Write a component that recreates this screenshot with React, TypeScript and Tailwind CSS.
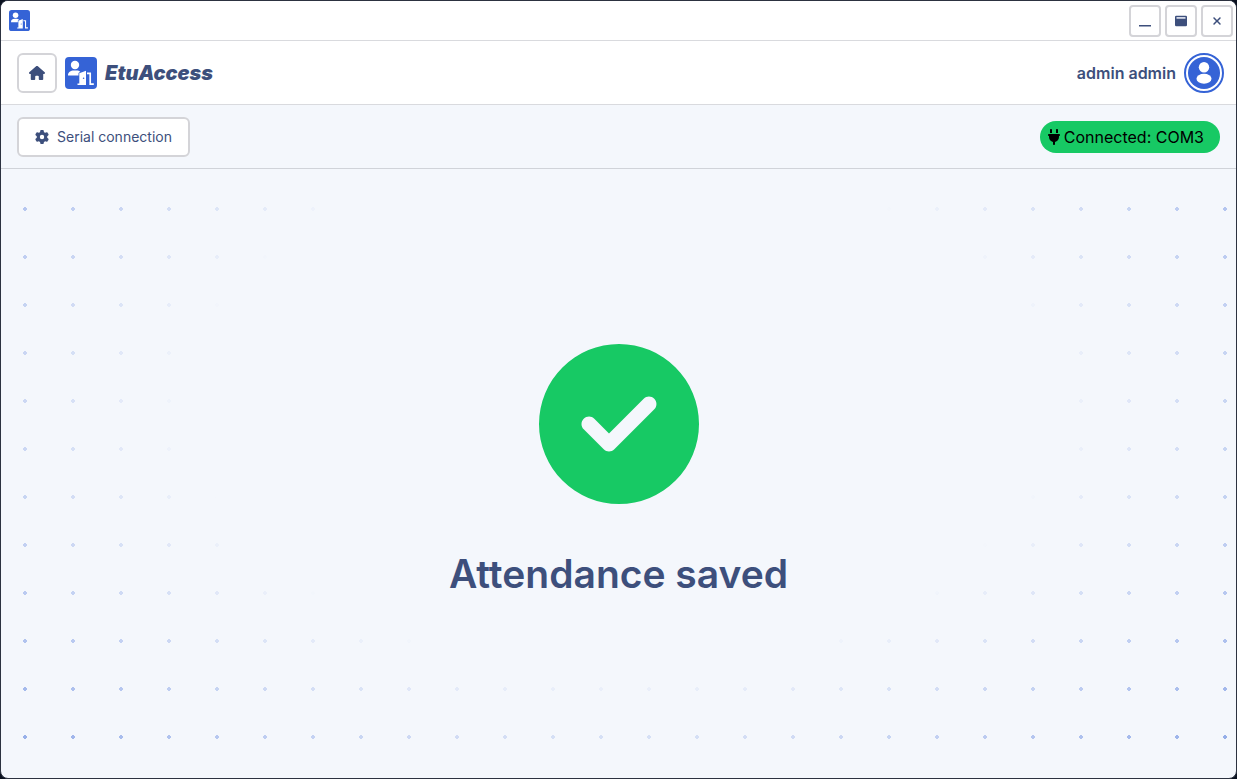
import { FaCircleCheck, FaGear, FaHouse, FaPlug, FaXmark } from "react-icons/fa6";

const windowButton =
  "grid size-8 place-items-center rounded border-2 border-[#d4d4d8] bg-white text-[#3d4f7c]";

function LogoMark({ className }: { className: string }) {
  return (
    <svg viewBox="0 0 32 32" className={className} aria-hidden="true">
      <rect width="32" height="32" rx="4" fill="#3563d6" />
      <circle cx="10" cy="8" r="4.2" fill="#fff" />
      <path d="M3 18.500C3 15.200 5.500 13.500 9 13.500h2.500c1.600 0 2.900.4 3.800 1.300L13.500 16v2.500z" fill="#fff" />
      <path d="M12.500 28v-1.500h1.800V16.300l6.700-2.500V28z" fill="#fff" />
      <path d="M22 16.300h3.200v10.900h3.600" fill="none" stroke="#fff" strokeWidth="1.700" />
      <circle cx="18.600" cy="21.300" r=".8" fill="#3563d6" />
    </svg>
  );
}

function TitleBar() {
  return (
    <div className="flex h-10 shrink-0 items-center justify-between border-b border-[#d9dade] bg-white pl-2 pr-[3px]">
      <LogoMark className="size-[21px]" />
      <div className="flex gap-1">
        <button type="button" aria-label="Minimize" className={windowButton}>
          <svg viewBox="0 0 12 12" className="size-3" aria-hidden="true">
            <path d="M0 10h12v1.500H0z" fill="currentColor" />
          </svg>
        </button>
        <button type="button" aria-label="Maximize" className={windowButton}>
          <svg viewBox="0 0 12 12" className="size-3" aria-hidden="true">
            <rect y=".7" width="12" height="10.600" rx="1.300" fill="currentColor" />
            <rect x="1.500" y="2" width="9" height="1.800" fill="#d4d9e8" />
          </svg>
        </button>
        <button type="button" aria-label="Close" className={windowButton}>
          <FaXmark className="size-3" />
        </button>
      </div>
    </div>
  );
}

function Header() {
  return (
    <header className="flex h-16 shrink-0 items-center justify-between border-b border-[#d9dade] bg-white pl-4 pr-3">
      <div className="flex items-center gap-2">
        <button
          type="button"
          aria-label="Home"
          className="grid size-10 place-items-center rounded-md border-2 border-[#d4d4d8] bg-white text-[#3d4f7c]"
        >
          <FaHouse className="size-4" />
        </button>
        <LogoMark className="size-8" />
        <span className="text-xl font-black italic text-[#3d4f7c]">EtuAccess</span>
      </div>
      <div className="flex items-center gap-2">
        <span className="font-semibold text-[#3d4f7c]">admin admin</span>
        <span className="grid size-10 place-items-center rounded-full border-2 border-[#3563d6] bg-white">
          <svg viewBox="0 0 32 32" className="size-8" aria-hidden="true">
            <circle cx="16" cy="16" r="16" fill="#3563d6" />
            <circle cx="16" cy="10.200" r="5.200" fill="#fff" />
            <ellipse cx="16" cy="21.800" rx="7.500" ry="5" fill="#fff" />
          </svg>
        </span>
      </div>
    </header>
  );
}

function Toolbar() {
  return (
    <div className="flex h-16 shrink-0 items-center justify-between border-b border-[#d0d3d9] bg-[#f4f7fc] px-4">
      <button
        type="button"
        className="flex h-10 items-center gap-2 rounded-md border-2 border-[#d4d4d8] bg-white px-4 text-sm text-[#3d4f7c]"
      >
        <FaGear className="size-3.5" />
        Serial connection
      </button>
      <div className="flex h-8 items-center gap-1 rounded-full bg-[#17c964] pl-2 pr-4 text-black">
        <FaPlug className="h-4 w-3" />
        Connected: COM3
      </div>
    </div>
  );
}

export default function App() {
  return (
    <div className="min-h-screen bg-[#0b1220] font-[Inter,sans-serif]">
      <div className="flex min-h-screen flex-col overflow-hidden rounded-lg border border-[#2c3240] bg-[#f4f7fc]">
        <TitleBar />
        <div className="relative isolate flex grow flex-col">
          <div className="absolute inset-0 -z-10 bg-[radial-gradient(circle,#3563d68f_2px,transparent_2px)] bg-size-[48px_48px] mask-[radial-gradient(ellipse_at_center,transparent_49%,black_100%)]" />
          <Header />
          <Toolbar />
          <main className="flex grow flex-col items-center justify-center gap-10">
            <FaCircleCheck className="size-40 text-[#17c964]" aria-hidden="true" />
            <h1 className="text-[39px] leading-[60px] font-semibold text-[#3d4f7c]">Attendance saved</h1>
          </main>
        </div>
      </div>
    </div>
  );
}
